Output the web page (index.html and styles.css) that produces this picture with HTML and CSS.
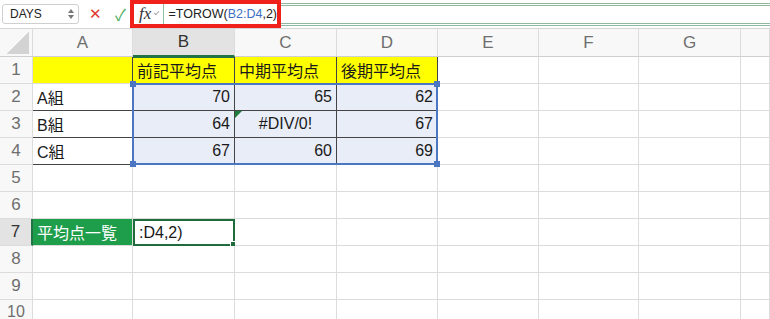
FILE: index.html
```html
<!DOCTYPE html>
<html lang="ja">
<head>
    <meta charset="UTF-8">
    <title>TOROW</title>
    <link rel="stylesheet" href="styles.css">
</head>
<body>
    <div class="toolbar">
        <div class="name-box">
            <span>DAYS</span>
            <span class="spin"><i class="up"></i><i class="down"></i></span>
        </div>
        <span class="btn cancel">&#x2715;</span>
        <span class="btn enter">&#x2713;</span>
        <div class="formula-mark">
            <span class="fx">fx</span>
            <span class="chev"></span>
            <span class="formula">=TOROW(<span class="ref">B2:D4</span>,2)</span>
        </div>
        <div class="formula-rest"></div>
    </div>

    <div class="sheet">
        <div class="hd corner"></div>
        <div class="hd">A</div>
        <div class="hd cur">B</div>
        <div class="hd">C</div>
        <div class="hd">D</div>
        <div class="hd">E</div>
        <div class="hd">F</div>
        <div class="hd">G</div>
        <div class="hd"></div>

        <div class="rh">1</div>
        <div class="c y dk-r"></div>
        <div class="c y dk-r top-g">前記平均点</div>
        <div class="c y dk-r">中期平均点</div>
        <div class="c y dk-r">後期平均点</div>
        <div class="c"></div><div class="c"></div><div class="c"></div><div class="c"></div>

        <div class="rh">2</div>
        <div class="c dk-b">A組</div>
        <div class="c sel num dk-r dk-b">70</div>
        <div class="c sel num dk-r dk-b">65</div>
        <div class="c sel num dk-r dk-b">62</div>
        <div class="c"></div><div class="c"></div><div class="c"></div><div class="c"></div>

        <div class="rh">3</div>
        <div class="c dk-b">B組</div>
        <div class="c sel num dk-r dk-b">64</div>
        <div class="c sel err mid dk-r dk-b">#DIV/0!</div>
        <div class="c sel num dk-r dk-b">67</div>
        <div class="c"></div><div class="c"></div><div class="c"></div><div class="c"></div>

        <div class="rh">4</div>
        <div class="c dk-b">C組</div>
        <div class="c sel num dk-r dk-b">67</div>
        <div class="c sel num dk-r dk-b">60</div>
        <div class="c sel num dk-r dk-b">69</div>
        <div class="c"></div><div class="c"></div><div class="c"></div><div class="c"></div>

        <div class="rh">5</div>
        <div class="c"></div><div class="c"></div><div class="c"></div><div class="c"></div>
        <div class="c"></div><div class="c"></div><div class="c"></div><div class="c"></div>

        <div class="rh">6</div>
        <div class="c"></div><div class="c"></div><div class="c"></div><div class="c"></div>
        <div class="c"></div><div class="c"></div><div class="c"></div><div class="c"></div>

        <div class="rh cur">7</div>
        <div class="c grn">平均点一覧</div>
        <div class="c active">:D4,2)<span class="fill-handle"></span></div>
        <div class="c"></div><div class="c"></div><div class="c"></div>
        <div class="c"></div><div class="c"></div><div class="c"></div>

        <div class="rh">8</div>
        <div class="c"></div><div class="c"></div><div class="c"></div><div class="c"></div>
        <div class="c"></div><div class="c"></div><div class="c"></div><div class="c"></div>

        <div class="rh">9</div>
        <div class="c"></div><div class="c"></div><div class="c"></div><div class="c"></div>
        <div class="c"></div><div class="c"></div><div class="c"></div><div class="c"></div>

        <div class="rh last">10</div>
        <div class="c"></div><div class="c"></div><div class="c"></div><div class="c"></div>
        <div class="c"></div><div class="c"></div><div class="c"></div><div class="c"></div>

        <div class="selection">
            <span class="h tl"></span><span class="h tr"></span>
            <span class="h bl"></span><span class="h br"></span>
        </div>
    </div>
</body>
</html>
```

FILE: styles.css
```css
body {
    margin: 0;
    width: 770px;
    height: 319px;
    overflow: hidden;
    background-color: #fff;
    font-family: "Liberation Sans", "Noto Sans CJK JP", sans-serif;
    color: #1a1a1a;
}
.toolbar {
    height: 28px;
    display: flex;
    align-items: center;
    border-bottom: 1px solid #d6d6d6;
    background-color: #fff;
}
.name-box {
    margin-left: 2px;
    width: 77px;
    height: 20px;
    box-sizing: border-box;
    border: 1px solid #cfcfcf;
    border-radius: 3px;
    display: flex;
    align-items: center;
    justify-content: space-between;
    padding: 0 4px 0 7px;
    font-size: 12px;
    color: #222;
}
.spin {
    display: flex;
    flex-direction: column;
    gap: 2px;
}
.spin i {
    width: 0;
    height: 0;
    border-left: 3px solid transparent;
    border-right: 3px solid transparent;
}
.spin .up {
    border-bottom: 4px solid #777;
}
.spin .down {
    border-top: 4px solid #777;
}
.btn {
    font-size: 15px;
    width: 25px;
    text-align: center;
}
.cancel {
    margin-left: 4px;
    color: #e0392f;
}
.enter {
    color: #4caf62;
    font-size: 16px;
}
.formula-mark {
    margin-left: -3px;
    height: 28px;
    width: 151px;
    box-sizing: border-box;
    border: 4px solid #f0201a;
    display: flex;
    align-items: center;
}
.fx {
    font-family: "Liberation Serif", serif;
    font-style: italic;
    font-size: 17px;
    color: #333;
    margin-left: 5px;
}
.chev {
    width: 4px;
    height: 4px;
    border-right: 1px solid #aaa;
    border-bottom: 1px solid #aaa;
    transform: rotate(45deg);
    margin: -3px 0 0 4px;
}
.formula {
    margin-left: 4px;
    padding-left: 5px;
    border-left: 1px solid #8fbf9d;
    height: 20px;
    line-height: 20px;
    font-size: 12.5px;
    color: #222;
    white-space: nowrap;
}
.ref {
    color: #3d6fc2;
}
.formula-rest {
    flex: 1;
    height: 17px;
    border-top: 3px double #8fb99c;
    border-bottom: 3px double #8fb99c;
}
.sheet {
    position: relative;
    display: grid;
    grid-template-columns: 33px 100px 102px 102px 101px 101px 100px 102px 29px;
    grid-template-rows: 28px repeat(10, 27px);
}
.hd, .rh, .c {
    box-sizing: border-box;
    border-right: 1px solid #dcdcdc;
    border-bottom: 1px solid #dcdcdc;
    display: flex;
    align-items: center;
}
.hd {
    background-color: #f8f8f8;
    justify-content: center;
    font-size: 17px;
    color: #6e6e6e;
    border-bottom-color: #cfcfcf;
}
.hd.cur {
    background-color: #e3e3e3;
    color: #333;
    border-bottom: 2px solid #217346;
}
.corner {
    background: linear-gradient(135deg, transparent 50%, #d3d3d3 50%) no-repeat;
    background-size: 22px 22px;
    background-position: 7px 3px;
    background-color: #f8f8f8;
}
.rh {
    background-color: #f8f8f8;
    justify-content: center;
    font-size: 17px;
    color: #6e6e6e;
}
.rh.cur {
    background-color: #e3e3e3;
    color: #333;
    border-right: 2px solid #217346;
}
.rh.last {
    align-items: flex-start;
    padding-top: 3px;
    font-size: 16px;
}
.c {
    position: relative;
    font-size: 16px;
    padding: 0 4px;
    white-space: nowrap;
}
.y {
    background-color: #ffff00;
}
.sel {
    background-color: #e8edf7;
}
.num {
    justify-content: flex-end;
}
.mid {
    justify-content: center;
}
.dk-r {
    border-right-color: #444;
}
.dk-b {
    border-bottom-color: #444;
}
.top-g {
    box-shadow: inset 0 1px 0 #217346;
}
.err::before {
    content: "";
    position: absolute;
    left: 0;
    top: 0;
    border-top: 7px solid #1e7d3c;
    border-right: 7px solid transparent;
}
.grn {
    background-color: #1e9e4a;
    color: #fff;
}
.active {
    border: 2px solid #1e6b3c;
    padding-left: 4px;
}
.fill-handle {
    position: absolute;
    right: -3px;
    bottom: -3px;
    width: 4px;
    height: 4px;
    background-color: #1e6b3c;
    border: 1px solid #fff;
}
.selection {
    position: absolute;
    left: 132px;
    top: 54px;
    width: 306px;
    height: 82px;
    border: 2px solid #4a76c2;
    box-sizing: border-box;
    pointer-events: none;
}
.h {
    position: absolute;
    width: 6px;
    height: 6px;
    background-color: #4a76c2;
}
.tl { left: -4px; top: -4px; }
.tr { right: -4px; top: -4px; }
.bl { left: -4px; bottom: -4px; }
.br { right: -4px; bottom: -4px; }
```
